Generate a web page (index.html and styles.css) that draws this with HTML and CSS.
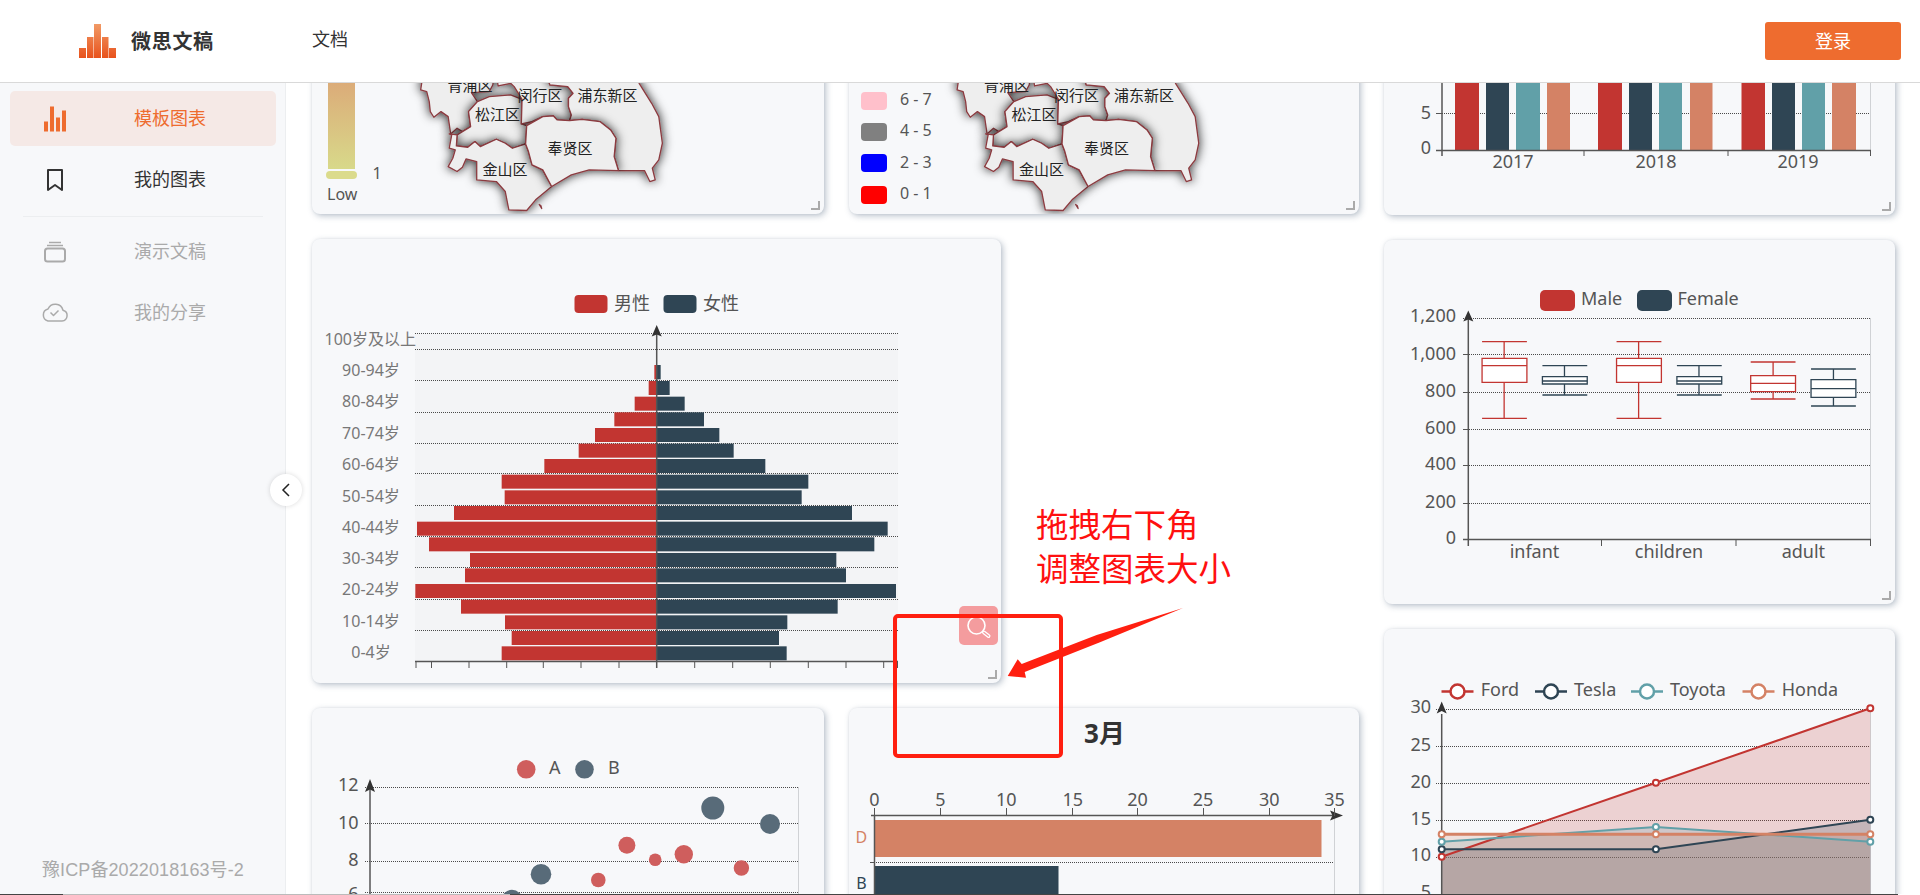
FILE: index.html
```html
<!DOCTYPE html>
<html lang="zh-CN">
<head>
<meta charset="utf-8">
<title>微思文稿</title>
<link rel="stylesheet" href="styles.css">
</head>
<body>
<div class="app">
  <header class="topbar">
    <div class="brand">
      <svg class="brand-logo" width="37" height="34" viewBox="79 24 37 34">
        <defs><linearGradient id="logoGrad" gradientUnits="userSpaceOnUse" x1="0" y1="24" x2="0" y2="58"><stop offset="0" stop-color="#f19a66"/><stop offset="1" stop-color="#e8521c"/></linearGradient></defs>
        <g fill="url(#logoGrad)"><rect x="79" y="48" width="7" height="10"/><rect x="87" y="37" width="6.5" height="21"/><rect x="94" y="24" width="7" height="34"/><rect x="102" y="37" width="6.5" height="21"/><rect x="109" y="48" width="7" height="10"/></g>
      </svg>
      <span class="brand-name">微思文稿</span>
    </div>
    <a class="nav-link">文档</a>
    <button class="login">登录</button>
  </header>

  <div class="workspace">
    <aside class="sidebar">
      <div class="menu-item active">
        <svg class="menu-icon" width="24" height="26" viewBox="43 105.500 24 26"><g fill="#ee6c2f"><rect x="44" y="121" width="4" height="10"/><rect x="50" y="106" width="4" height="25"/><rect x="56" y="117" width="4" height="14"/><rect x="62" y="110" width="4" height="21"/></g></svg>
        <span>模板图表</span>
      </div>
      <div class="menu-item">
        <svg class="menu-icon" width="24" height="24" viewBox="43 169 24 24"><path d="M48 171h14v20l-7-5-7 5z" fill="none" stroke="#333" stroke-width="2" stroke-linejoin="round"/></svg>
        <span>我的图表</span>
      </div>
      <div class="menu-divider"></div>
      <div class="menu-item muted">
        <svg class="menu-icon" width="24" height="22" viewBox="43 242 24 22"><g fill="none" stroke="#aaa"><rect x="45" y="249.500" width="20" height="13" rx="2.500" stroke-width="2"/><path d="M47 246.500h16M49 243.500h12" stroke-width="1.500"/></g></svg>
        <span>演示文稿</span>
      </div>
      <div class="menu-item muted">
        <svg class="menu-icon cloud" width="28" height="20" viewBox="41 305 28 20"><path d="M48 323h14a5.500 5.500 0 0 0 1-10.800 8 8 0 0 0-15-1.200 6.200 6.200 0 0 0 0 12z M50.500 314.500l3 3 5-5" fill="none" stroke="#aaa" stroke-width="1.500" stroke-linejoin="round"/></svg>
        <span>我的分享</span>
      </div>
      <div class="icp">豫ICP备2022018163号-2</div>
    </aside>

    <main class="board">
      <div class="canvas">
        <div class="left-area">
          <div class="row">
            <section class="card wide">
              <svg class="chart" width="512" height="300" viewBox="312 -86 512 300">
                <defs>
                  <linearGradient id="vmGrad" x1="0" y1="0" x2="0" y2="1"><stop offset="0" stop-color="#dd9570"/><stop offset="1" stop-color="#d8d98a"/></linearGradient>
                  <filter id="mapShadow" x="-30%" y="-30%" width="160%" height="160%"><feDropShadow dx="0" dy="0" stdDeviation="15" flood-color="#000" flood-opacity=".85"/></filter>
                  <g id="shanghai" transform="translate(300 60) scale(.357 .333)" fill="#eeeeee" stroke="#8b3a3f" stroke-width="1.300" stroke-linejoin="round">
                    <path filter="url(#mapShadow)" d="M345 40L338 90 355 95 362 125 365 155 375 172 395 155 415 170 422 222 440 205 455 215 478 200 472 155 497 125 480 98 530 95 540 75 545 40Z"/>
                    <path filter="url(#mapShadow)" d="M497 125L472 155 478 200 455 215 440 225 438 258 470 262 490 245 505 260 550 238 575 250 595 265 632 252 635 197 620 192 622 118 590 105 530 110Z"/>
                    <path filter="url(#mapShadow)" d="M550 40L555 78 590 70 600 80 622 118 620 192 650 185 680 170 710 168 720 180 755 182 760 165 752 140 752 115 765 100 750 80 700 75 690 40Z"/>
                    <path filter="url(#mapShadow)" d="M690 40L700 75 750 80 765 100 752 115 752 140 760 165 755 182 790 178 840 185 870 210 885 235 880 290 892 332 965 332 980 365 995 360 987 325 1005 300 1015 250 1005 170 985 130 950 70 935 40Z"/>
                    <path filter="url(#mapShadow)" d="M418 222L425 225 418 265 435 270 428 295 415 320 440 335 455 322 465 297 495 305 495 360 550 365 575 395 585 450 635 452 660 420 705 380 680 330 650 315 640 275 632 252 595 265 575 250 550 238 505 260 490 245 470 262 438 258 440 225Z"/>
                    <path filter="url(#mapShadow)" d="M635 197L680 170 710 168 720 180 755 182 790 178 840 185 870 210 885 235 880 290 892 332 810 330 760 345 705 380 680 330 650 315 640 275 632 252Z"/>
                    <path d="M670 434l5 4 2 8z"/>
                  </g>
                </defs>
                <rect x="328" y="40" width="27" height="129" fill="url(#vmGrad)"/>
                <rect x="326" y="171" width="31" height="8" rx="4" fill="#dbdb8c"/>
                <text class="tx t16 mid" x="377" y="173">1</text>
                <text class="tx t16" x="327" y="194">Low</text>
                <use href="#shanghai"/>
                <g class="map-label">
                  <text x="470" y="84">青浦区</text><text x="540" y="94">闵行区</text><text x="607.500" y="94">浦东新区</text><text x="497.500" y="113">松江区</text><text x="570" y="147">奉贤区</text><text x="505" y="168">金山区</text>
                </g>
              </svg>
            </section>
            <section class="card mid-col">
              <svg class="chart" width="510" height="300" viewBox="849 -86 510 300">
                <g transform="translate(536.400 0)"><use href="#shanghai"/></g>
                <g class="map-label">
                  <text x="1006.400" y="84">青浦区</text><text x="1076.400" y="94">闵行区</text><text x="1143.900" y="94">浦东新区</text><text x="1033.900" y="113">松江区</text><text x="1106.400" y="147">奉贤区</text><text x="1041.400" y="168">金山区</text>
                </g>
                <rect x="861" y="92" width="26" height="18" rx="4" fill="#ffc0cb"/><rect x="861" y="123" width="26" height="18" rx="4" fill="#808080"/><rect x="861" y="154" width="26" height="18" rx="4" fill="#0000ff"/><rect x="861" y="186" width="26" height="18" rx="4" fill="#ff0000"/>
                <text class="tx t16" x="900" y="99">6 - 7</text><text class="tx t16" x="900" y="130">4 - 5</text><text class="tx t16" x="900" y="162">2 - 3</text><text class="tx t16" x="900" y="193">0 - 1</text>
              </svg>
            </section>
          </div>

          <section class="card pyramid">
            <svg class="chart" width="689" height="444" viewBox="312 239 689 444">
              <text class="tx t18" x="614" y="303">男性</text><text class="tx t18" x="703" y="303">女性</text>
              <rect x="574.500" y="295" width="33" height="18" rx="4" fill="#c23531"/><rect x="663.500" y="295" width="33" height="18" rx="4" fill="#2f4554"/>
              <rect x="415" y="334" width="483" height="328" fill="#f3f4f6"/>
              <g class="grid">
                <line x1="415" x2="898" y1="333.500" y2="333.500"/><line x1="415" x2="898" y1="349.500" y2="349.500"/><line x1="415" x2="898" y1="380.500" y2="380.500"/><line x1="415" x2="898" y1="412.500" y2="412.500"/><line x1="415" x2="898" y1="443.500" y2="443.500"/><line x1="415" x2="898" y1="473.500" y2="473.500"/><line x1="415" x2="898" y1="505.500" y2="505.500"/><line x1="415" x2="898" y1="536.500" y2="536.500"/><line x1="415" x2="898" y1="567.500" y2="567.500"/><line x1="415" x2="898" y1="599.500" y2="599.500"/><line x1="415" x2="898" y1="630.500" y2="630.500"/>
              </g>
              <g transform="translate(310 280) scale(.33333)" fill="#c23531">
                <rect x="1033" y="255" width="7" height="43"/><rect x="1016" y="303" width="24" height="42"/><rect x="974" y="350" width="66" height="42"/><rect x="913" y="397" width="127" height="42"/><rect x="855" y="444" width="185" height="42"/><rect x="806" y="491" width="234" height="42"/><rect x="703" y="537" width="337" height="42"/><rect x="575" y="584" width="465" height="42"/><rect x="584" y="631" width="456" height="42"/><rect x="432" y="678" width="608" height="42"/><rect x="321" y="725" width="719" height="42"/><rect x="357" y="772" width="683" height="42"/><rect x="480" y="819" width="560" height="42"/><rect x="465" y="865" width="575" height="42"/><rect x="316" y="912" width="724" height="42"/><rect x="453" y="959" width="587" height="42"/><rect x="585" y="1006" width="455" height="42"/><rect x="605" y="1053" width="435" height="42"/><rect x="575" y="1099" width="465" height="42"/>
              </g>
              <g transform="translate(640 280) scale(.33333)" fill="#2f4554">
                <rect x="50" y="255" width="12" height="43"/><rect x="50" y="303" width="39" height="42"/><rect x="50" y="350" width="84" height="42"/><rect x="50" y="397" width="142" height="42"/><rect x="50" y="444" width="188" height="42"/><rect x="50" y="491" width="231" height="42"/><rect x="50" y="537" width="326" height="42"/><rect x="50" y="584" width="455" height="42"/><rect x="50" y="631" width="435" height="42"/><rect x="50" y="678" width="586" height="42"/><rect x="50" y="725" width="693" height="42"/><rect x="50" y="772" width="653" height="42"/><rect x="50" y="819" width="539" height="42"/><rect x="50" y="865" width="568" height="42"/><rect x="50" y="912" width="718" height="42"/><rect x="50" y="959" width="543" height="42"/><rect x="50" y="1006" width="392" height="42"/><rect x="50" y="1053" width="367" height="42"/><rect x="50" y="1099" width="390" height="42"/>
              </g>
              <g class="axis">
                <line x1="656.700" x2="656.700" y1="332" y2="668"/><line x1="415" x2="898" y1="661.500" y2="661.500"/>
                <path class="arrow" d="M656.700 325l5 11.500-5-2-5 2z"/>
                <path d="M416 662v6M431.500 662v6M469 662v6M506.700 662v6M543.300 662v6M581 662v6M619 662v6M694.700 662v6M732.700 662v6M770.300 662v6M808.300 662v6M846 662v6M883.700 662v6M897.500 662v6"/>
              </g>
              <g class="tx t16 ylab">
                <text class="end" x="416" y="339">100岁及以上</text><text x="371" y="370">90-94岁</text><text x="371" y="401">80-84岁</text><text x="371" y="433">70-74岁</text><text x="371" y="464">60-64岁</text><text x="371" y="496">50-54岁</text><text x="371" y="527">40-44岁</text><text x="371" y="558">30-34岁</text><text x="371" y="589">20-24岁</text><text x="371" y="621">10-14岁</text><text x="371" y="652">0-4岁</text>
              </g>
              <rect x="959" y="606" width="39" height="39" rx="5" fill="#f49c9e"/>
              <circle cx="976.500" cy="625.500" r="8.500" fill="none" stroke="#fff" stroke-width="1.600"/>
              <path d="M984 632.500l4.500 3.500" stroke="#fff" stroke-width="4" stroke-linecap="round"/>
              <path d="M984 632.500l4.500 3.500" stroke="#f49c9e" stroke-width="1.400" stroke-linecap="round"/>
            </svg>
          </section>

          <div class="row">
            <section class="card wide lower">
              <svg class="chart" width="512" height="400" viewBox="312 708 512 400">
                <circle cx="526.200" cy="769.300" r="9.300" fill="#cf5e5d"/><circle cx="584.500" cy="769.300" r="9.300" fill="#586b79"/>
                <text class="tx t18" x="549" y="767">A</text><text class="tx t18" x="608" y="767">B</text>
                <g class="grid"><line x1="365" x2="798" y1="787.500" y2="787.500"/><line x1="365" x2="798" y1="823.500" y2="823.500"/><line x1="365" x2="798" y1="861.500" y2="861.500"/><line x1="365" x2="798" y1="892.500" y2="892.500"/></g>
                <line class="edge" x1="798.500" x2="798.500" y1="787" y2="900"/>
                <g class="axis"><line x1="370" x2="370" y1="785" y2="900"/><path class="arrow" d="M370 779l5 13-5-2.500-5 2.500z"/></g>
                <g class="tx t18 end"><text x="358.500" y="784">12</text><text x="358.500" y="821.500">10</text><text x="358.500" y="858.500">8</text><text x="358.500" y="893">6</text></g>
                <g fill="#586b79"><circle cx="712.800" cy="808" r="11.500"/><circle cx="770" cy="824" r="10"/><circle cx="541" cy="874.300" r="10.300"/><circle cx="512" cy="900" r="10.300"/></g>
                <g fill="#cf5e5d"><circle cx="626.900" cy="845.300" r="8.500"/><circle cx="655.200" cy="859.700" r="6.300"/><circle cx="683.800" cy="854.300" r="9.200"/><circle cx="741.400" cy="868" r="7.700"/><circle cx="598.300" cy="880" r="7.300"/></g>
              </svg>
            </section>
            <section class="card mid-col lower">
              <svg class="chart" width="510" height="400" viewBox="849 708 510 400">
                <text class="chart-title mid" x="1104.500" y="733">3月</text>
                <g class="tx t18 mid"><text x="874.500" y="799">0</text><text x="940.300" y="799">5</text><text x="1006.200" y="799">10</text><text x="1072.800" y="799">15</text><text x="1137.600" y="799">20</text><text x="1203.100" y="799">25</text><text x="1269.300" y="799">30</text><text x="1334.500" y="799">35</text></g>
                <line class="edge" x1="1334.500" x2="1334.500" y1="816" y2="900"/>
                <rect x="874.500" y="820" width="447" height="37" fill="#d48265"/>
                <rect x="874.500" y="866" width="184" height="40" fill="#2f4554"/>
                <g class="grid"><line x1="870" x2="1334" y1="862.500" y2="862.500"/></g>
                <g class="axis"><line x1="871" x2="1336" y1="815.500" y2="815.500"/><line x1="874.500" x2="874.500" y1="816" y2="900"/><path class="arrow" d="M1343 815.500l-13 5 2.500-5-2.500-5z"/><path d="M874.500 808v8M940.500 808v8M1006.500 808v8M1072.500 808v8M1137.500 808v8M1203.500 808v8M1269.500 808v8M1334.500 808v8M870 862.500h5"/></g>
                <text class="tx t16 mid label-d" x="861.400" y="837">D</text><text class="tx t16 mid label-b" x="861.400" y="883">B</text>
              </svg>
            </section>
          </div>
        </div>

        <div class="right-area">
          <section class="card top-right">
            <svg class="chart" width="511" height="301" viewBox="1384 -86 511 301">
              <g class="grid"><line x1="1436" x2="1870" y1="113.500" y2="113.500"/></g>
              <line class="edge" x1="1870.500" x2="1870.500" y1="40" y2="150"/>
              <g fill="#c23531"><rect x="1455" y="40" width="24" height="110"/><rect x="1598" y="40" width="24" height="110"/><rect x="1741.500" y="40" width="23.500" height="110"/></g>
              <g fill="#2f4554"><rect x="1486" y="40" width="23" height="110"/><rect x="1629" y="40" width="23" height="110"/><rect x="1772" y="40" width="23" height="110"/></g>
              <g fill="#61a0a8"><rect x="1516" y="40" width="24" height="110"/><rect x="1659" y="40" width="23" height="110"/><rect x="1802" y="40" width="23" height="110"/></g>
              <g fill="#d48265"><rect x="1547" y="40" width="23" height="110"/><rect x="1690" y="40" width="22.500" height="110"/><rect x="1832" y="40" width="24" height="110"/></g>
              <g class="axis"><line x1="1442" x2="1442" y1="40" y2="156"/><line x1="1436" x2="1871" y1="150.500" y2="150.500"/><path d="M1584 151v5M1728 151v5M1870.500 151v5M1436 113.500h6"/></g>
              <g class="tx t18 end"><text x="1431" y="111.500">5</text><text x="1431" y="147">0</text></g>
              <g class="tx t18 mid"><text x="1513" y="161">2017</text><text x="1656" y="161">2018</text><text x="1798" y="161">2019</text></g>
            </svg>
          </section>

          <section class="card box-card">
            <svg class="chart" width="511" height="364" viewBox="1384 240 511 364">
              <rect x="1540" y="290" width="35" height="21" rx="5" fill="#c23531"/><rect x="1637" y="290" width="35" height="21" rx="5" fill="#2f4554"/>
              <text class="tx t18" x="1581" y="298">Male</text><text class="tx t18" x="1677.500" y="298">Female</text>
              <g class="tx t18 end"><text x="1456" y="315">1,200</text><text x="1456" y="353">1,000</text><text x="1456" y="390">800</text><text x="1456" y="427">600</text><text x="1456" y="463">400</text><text x="1456" y="501">200</text><text x="1456" y="537">0</text></g>
              <g class="tx t18 mid"><text x="1534.500" y="551">infant</text><text x="1669" y="551">children</text><text x="1803.400" y="551">adult</text></g>
              <g class="grid"><line x1="1463" x2="1870" y1="318.500" y2="318.500"/><line x1="1463" x2="1870" y1="354.500" y2="354.500"/><line x1="1463" x2="1870" y1="392.500" y2="392.500"/><line x1="1463" x2="1870" y1="429.500" y2="429.500"/><line x1="1463" x2="1870" y1="465.500" y2="465.500"/><line x1="1463" x2="1870" y1="503.500" y2="503.500"/></g>
              <line class="edge" x1="1870.500" x2="1870.500" y1="318" y2="540"/>
              <g transform="translate(1380 240) scale(.34483 .33333)" class="box red">
                <path d="M296 305H426M360 305V355M296 535H426M360 427V535"/><rect x="296" y="355" width="130" height="72"/><path d="M296 377H426"/>
                <path d="M686 305H816M750 305V355M686 535H816M750 427V535"/><rect x="686" y="355" width="130" height="72"/><path d="M686 377H816"/>
                <path d="M1075 366H1205M1140 366V407M1075 477H1205M1140 455V477"/><rect x="1075" y="407" width="130" height="48"/><path d="M1075 430H1205"/>
              </g>
              <g transform="translate(1380 240) scale(.34483 .33333)" class="box navy">
                <path d="M471 377H601M535 377V410M471 465H601M535 432V465"/><rect x="471" y="410" width="130" height="22"/><path d="M471 423H601"/>
                <path d="M861 377H991M925 377V410M861 465H991M925 432V465"/><rect x="861" y="410" width="130" height="22"/><path d="M861 423H991"/>
                <path d="M1250 387H1380M1315 387V419M1250 498H1380M1315 472V498"/><rect x="1250" y="419" width="130" height="53"/><path d="M1250 446H1380"/>
              </g>
              <g class="axis"><line x1="1468.300" x2="1468.300" y1="314" y2="546"/><line x1="1463" x2="1871" y1="539.500" y2="539.500"/><path class="arrow" d="M1468.300 310.500l5 11-5-2-5 2z"/><path d="M1601.500 540v6M1736 540v6M1870.500 540v6M1463 354.500h5M1463 392.500h5M1463 429.500h5M1463 465.500h5M1463 503.500h5"/></g>
            </svg>
          </section>

          <section class="card lower">
            <svg class="chart" width="511" height="400" viewBox="1384 629 511 400">
              <g class="tx t18"><text x="1480.700" y="689">Ford</text><text x="1574" y="689">Tesla</text><text x="1670" y="689">Toyota</text><text x="1781.700" y="689">Honda</text></g>
              <g class="legend-line">
                <g class="s-ford"><path d="M1441.500 691.500h32"/><circle cx="1457.500" cy="691.500" r="7"/></g>
                <g class="s-tesla"><path d="M1535 691.500h32"/><circle cx="1551" cy="691.500" r="7"/></g>
                <g class="s-toyota"><path d="M1631 691.500h32"/><circle cx="1647" cy="691.500" r="7"/></g>
                <g class="s-honda"><path d="M1742.500 691.500h32"/><circle cx="1758.500" cy="691.500" r="7"/></g>
              </g>
              <g class="grid"><line x1="1436" x2="1870" y1="709.500" y2="709.500"/><line x1="1436" x2="1870" y1="746.500" y2="746.500"/><line x1="1436" x2="1870" y1="783.500" y2="783.500"/><line x1="1436" x2="1870" y1="820.500" y2="820.500"/><line x1="1436" x2="1870" y1="857.500" y2="857.500"/></g>
              <line class="edge" x1="1870.500" x2="1870.500" y1="709" y2="900"/>
              <g class="tx t18 end"><text x="1431" y="706">30</text><text x="1431" y="744">25</text><text x="1431" y="781">20</text><text x="1431" y="818">15</text><text x="1431" y="854">10</text><text x="1431" y="891">5</text></g>
              <path d="M1441.700 856.700L1655.900 782.700 1870.300 708.300V900H1441.700Z" fill="#c23531" fill-opacity=".2"/>
              <path d="M1441.700 849.300L1655.900 849.300 1870.300 819.700V900H1441.700Z" fill="#2f4554" fill-opacity=".2"/>
              <path d="M1441.700 841.700L1655.900 827 1870.300 841.700V900H1441.700Z" fill="#61a0a8" fill-opacity=".2"/>
              <path d="M1441.700 834.300H1870.300V900H1441.700Z" fill="#d48265" fill-opacity=".2"/>
              <g class="axis"><line x1="1441.700" x2="1441.700" y1="714" y2="900"/><path class="arrow" d="M1441.700 701.500l5 12-5-2.500-5 2.500z"/></g>
              <g class="series">
                <g class="s-ford"><path d="M1441.700 856.700L1655.900 782.700 1870.300 708.300"/><circle cx="1441.700" cy="856.700" r="3"/><circle cx="1655.900" cy="782.700" r="3"/><circle cx="1870.300" cy="708.300" r="3"/></g>
                <g class="s-tesla"><path d="M1441.700 849.300L1655.900 849.300 1870.300 819.700"/><circle cx="1441.700" cy="849.300" r="3"/><circle cx="1655.900" cy="849.300" r="3"/><circle cx="1870.300" cy="819.700" r="3"/></g>
                <g class="s-toyota"><path d="M1441.700 841.700L1655.900 827 1870.300 841.700"/><circle cx="1441.700" cy="841.700" r="3"/><circle cx="1655.900" cy="827" r="3"/><circle cx="1870.300" cy="841.700" r="3"/></g>
                <g class="s-honda"><path d="M1441.700 834.300H1870.300"/><circle cx="1441.700" cy="834.300" r="3"/><circle cx="1655.900" cy="834.300" r="3"/><circle cx="1870.300" cy="834.300" r="3"/></g>
              </g>
            </svg>
          </section>
        </div>
      </div>
    </main>
  </div>

  <button class="collapse" aria-label="收起">
    <svg width="10" height="16" viewBox="0 0 10 16"><path d="M8 2L2 8l6 6" fill="none" stroke="#222" stroke-width="1.500"/></svg>
  </button>

  <svg class="annotation" width="1920" height="895" viewBox="0 0 1920 895">
    <rect class="note-box" x="895" y="616" width="166" height="140" rx="3"/>
    <polygon class="note-arrow" points="1183,608 1096.700,635 1021.700,664 1017.700,659.300 1007.700,676 1026,677.700 1024.700,672 1100,642.300"/>
    <text class="note-text" x="1036" y="522">拖拽右下角</text>
    <text class="note-text" x="1036" y="566">调整图表大小</text>
  </svg>
  <div class="bottom-edge"></div>
</div>
</body>
</html>
```

FILE: styles.css
```css
* { box-sizing: border-box; }
html, body { margin: 0; height: 100%; overflow: hidden; background: #fff; }
body { font-family: "Noto Sans", "Noto Sans CJK SC", sans-serif; color: #333; }

.app { position: relative; width: 1920px; height: 895px; overflow: hidden; display: flex; flex-direction: column; }

/* Header */
.topbar { position: relative; z-index: 3; flex: none; height: 83px; padding: 0 19px 1px 79px; display: flex; align-items: center; background: #fff; border-bottom: 1px solid #d9d9d9; }
.brand { display: flex; align-items: center; gap: 15px; width: 233px; }
.brand-logo { display: block; }
.brand-name { font-size: 20px; font-weight: 700; letter-spacing: .7px; color: #333; font-family: "Noto Sans CJK SC", sans-serif; }
.nav-link { font-size: 18px; color: #333; margin-bottom: 6px; font-family: "Noto Sans CJK SC", sans-serif; }
.login { margin-left: auto; width: 136px; height: 38px; padding: 0 0 2px; border: 0; border-radius: 3px; background: #ee6c2f; color: #fff; font: 18px "Noto Sans CJK SC", sans-serif; }

/* Body */
.workspace { flex: 1; display: flex; min-height: 0; }
.sidebar { flex: none; width: 286px; padding-top: 8px; display: flex; flex-direction: column; background: #f7f8fa; border-right: 1px solid #eceef0; font-family: "Noto Sans CJK SC", sans-serif; }
.menu-item { height: 55px; margin: 0 9px 6px 10px; padding-left: 33px; display: flex; align-items: center; font-size: 18px; border-radius: 5px; color: #333; }
.menu-item span { margin-left: 67px; padding-bottom: 3px; }
.menu-icon { flex: none; display: block; }
.menu-icon.cloud { margin: 0 -2px; }
.menu-item.active { background: #f5e9e6; color: #ee6c2f; }
.menu-item.muted { color: #aaa; }
.menu-divider { height: 1px; margin: 3px 22px 7px 23px; background: #eceef0; }
.icp { margin-top: auto; padding: 0 0 14px 42px; font: 18px "Liberation Sans", "Noto Sans CJK SC", sans-serif; letter-spacing: .1px; color: #aaa; white-space: nowrap; }

.board { flex: 1; min-width: 0; overflow: hidden; background: #fff; }
.canvas { margin-top: -169px; padding-left: 26px; display: flex; gap: 24px; align-items: flex-start; }
.left-area { width: 1048px; display: flex; flex-direction: column; gap: 25px; }
.right-area { width: 511px; display: flex; flex-direction: column; gap: 25px; }
.row { display: flex; gap: 25px; }

.card { position: relative; flex: none; width: 511px; background: #f7f8fa; border-radius: 8px; box-shadow: 2px 2px 6px rgba(105, 122, 145, .45), 0 0 2px rgba(105, 122, 145, .12); }
.card.wide { width: 512px; }
.card.mid-col { width: 510px; }
.card.pyramid { width: 689px; }
.card.lower { height: 400px; }
.card::after { content: ""; position: absolute; right: 4px; bottom: 4px; width: 7px; height: 7px; border-right: 2px solid #aaa; border-bottom: 2px solid #aaa; }
.chart { display: block; overflow: hidden; border-radius: 8px; }
.chart rect, .chart line, .chart path { vector-effect: non-scaling-stroke; }

/* Chart text */
.tx, .tx text { fill: #555; dominant-baseline: central; }
.t16, .t16 text { font-size: 16px; }
.t18, .t18 text { font-size: 18px; }
.mid, .mid text { text-anchor: middle; }
.end, .end text { text-anchor: end; }
.ylab text { text-anchor: middle; fill: #777; }
.ylab text.end { text-anchor: end; }
.map-label text { font: 15px "Noto Sans CJK SC", sans-serif; fill: #222; text-anchor: middle; dominant-baseline: central; }
.chart-title { font: 700 26px "Noto Sans", "Noto Sans CJK SC", sans-serif; fill: #333; dominant-baseline: central; }
.label-d { fill: #d48265; }
.label-b { fill: #2f4554; }

.grid line { stroke: #4a4a4a; stroke-width: 1; stroke-dasharray: 1 1; }
.edge { stroke: #d0d2d5; stroke-width: 1; }
.axis line, .axis path { stroke: #555; stroke-width: 1.500; fill: none; }
.axis path { stroke-width: 1; }
.axis path.arrow { fill: #333; stroke: none; }

.box rect { fill: #fff; stroke-width: 1.300; }
.box path { fill: none; stroke-width: 1.300; }
.box.red rect, .box.red path { stroke: #c23531; }
.box.navy rect, .box.navy path { stroke: #2f4554; }

.legend-line path { stroke-width: 2.500; fill: none; }
.legend-line circle { fill: #fff; stroke-width: 2.500; }
.series path { stroke-width: 2; fill: none; }
.series circle { fill: #fff; stroke-width: 2; }
.s-ford path, .s-ford circle { stroke: #c23531; }
.s-tesla path, .s-tesla circle { stroke: #2f4554; }
.s-toyota path, .s-toyota circle { stroke: #61a0a8; }
.s-honda path, .s-honda circle { stroke: #d48265; }
.series .s-honda path { stroke-width: 3; }

/* Overlays */
.collapse { position: absolute; z-index: 2; left: 270px; top: 474px; width: 32px; height: 32px; padding: 0; display: flex; align-items: center; justify-content: center; border: 0; border-radius: 50%; background: #fff; box-shadow: 0 0 5px rgba(0, 0, 0, .15); }
.annotation { position: absolute; z-index: 2; left: 0; top: 0; pointer-events: none; }
.note-box { fill: none; stroke: #ff1f10; stroke-width: 4; }
.note-arrow { fill: #ff1f10; }
.note-text { font: 32.500px "Noto Sans CJK SC", sans-serif; fill: #ff1010; dominant-baseline: central; }
.bottom-edge { position: absolute; z-index: 4; left: 0; right: 0; bottom: 0; height: 1px; background: linear-gradient(90deg, #444 0, #444 63px, #bbb 63px, #bbb 510px, #444 510px, #444 1898px, #fff 1898px); }
```
